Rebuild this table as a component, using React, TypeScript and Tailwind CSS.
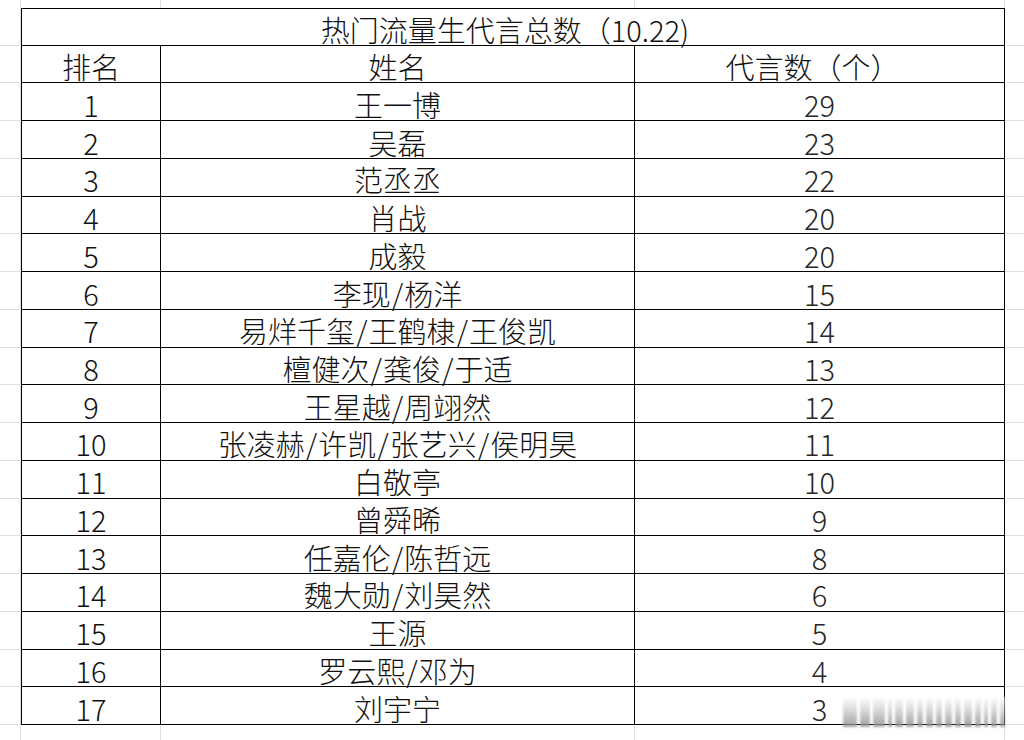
import React from "react";

const data: [number, string, number][] = [
  [1, "王一博", 29],
  [2, "吴磊", 23],
  [3, "范丞丞", 22],
  [4, "肖战", 20],
  [5, "成毅", 20],
  [6, "李现/杨洋", 15],
  [7, "易烊千玺/王鹤棣/王俊凯", 14],
  [8, "檀健次/龚俊/于适", 13],
  [9, "王星越/周翊然", 12],
  [10, "张凌赫/许凯/张艺兴/侯明昊", 11],
  [11, "白敬亭", 10],
  [12, "曾舜晞", 9],
  [13, "任嘉伦/陈哲远", 8],
  [14, "魏大勋/刘昊然", 6],
  [15, "王源", 5],
  [16, "罗云熙/邓为", 4],
  [17, "刘宇宁", 3],
];

function Name({ text }: { text: string }) {
  const parts = text.split("/");
  return (
    <span>
      {parts.map((p, i) => (
        <React.Fragment key={i}>
          {i > 0 && <span className="mx-[1px]">/</span>}
          {p}
        </React.Fragment>
      ))}
    </span>
  );
}

const faint = "border-[#dedede]";
const cellText =
  "flex items-center justify-center pt-[5px] text-[29px] font-light leading-none text-[#111]";

export default function App() {
  return (
    <div
      className="relative w-[1024px] h-[740px] bg-white overflow-hidden"
      style={{ fontFamily: '"Noto Sans CJK SC", "Noto Sans", sans-serif' }}
    >
      <div className="grid h-full grid-cols-[21px_140px_474px_370px_19px] grid-rows-[8px_repeat(19,minmax(0,1fr))_15px]">
        {/* top strip */}
        <div className={`border-r ${faint}`} />
        <div className={`border-r ${faint}`} />
        <div className={`border-r ${faint}`} />
        <div className={`border-r ${faint}`} />
        <div />

        {/* title row */}
        <div className={`border-r border-b ${faint}`} />
        <div className={`col-span-3 border border-black ${cellText} pr-[16px]`}>
          热门流量生代言总数（10.22)
        </div>
        <div className={`border-b ${faint}`} />

        {/* header row */}
        <div className={`border-r border-b ${faint}`} />
        <div className={`border-l border-r border-b border-black ${cellText}`}>排名</div>
        <div className={`border-r border-b border-black ${cellText}`}>姓名</div>
        <div className={`border-r border-b border-black ${cellText} pr-[14px]`}>代言数（个）</div>
        <div className={`border-b ${faint}`} />

        {data.map(([rank, name, count]) => (
          <React.Fragment key={rank}>
            <div className={`border-r border-b ${faint}`} />
            <div className={`border-l border-r border-b border-black ${cellText}`}>{rank}</div>
            <div className={`border-r border-b border-black ${cellText}`}>
              <Name text={name} />
            </div>
            <div className={`border-r border-b border-black ${cellText} text-[#262626]`}>{count}</div>
            <div className={`border-b ${faint}`} />
          </React.Fragment>
        ))}

        {/* bottom strip */}
        <div className={`border-r ${faint}`} />
        <div className={`border-r ${faint}`} />
        <div className={`border-r ${faint}`} />
        <div className={`border-r ${faint}`} />
        <div />
      </div>

      {/* blurred watermark */}
      <div className="absolute left-[843px] top-[697px] flex h-[30px] w-[170px] items-stretch gap-[3px] opacity-80 blur-[1px]">
        {[14, 10, 12, 4, 8, 8, 6, 7, 6, 7, 6, 8, 6, 4, 6, 5].map((w, i) => (
          <div
            key={i}
            className="bg-gradient-to-b from-white via-[#c9c9c9] to-[#8a8a8a]"
            style={{ width: w }}
          />
        ))}
      </div>
    </div>
  );
}
